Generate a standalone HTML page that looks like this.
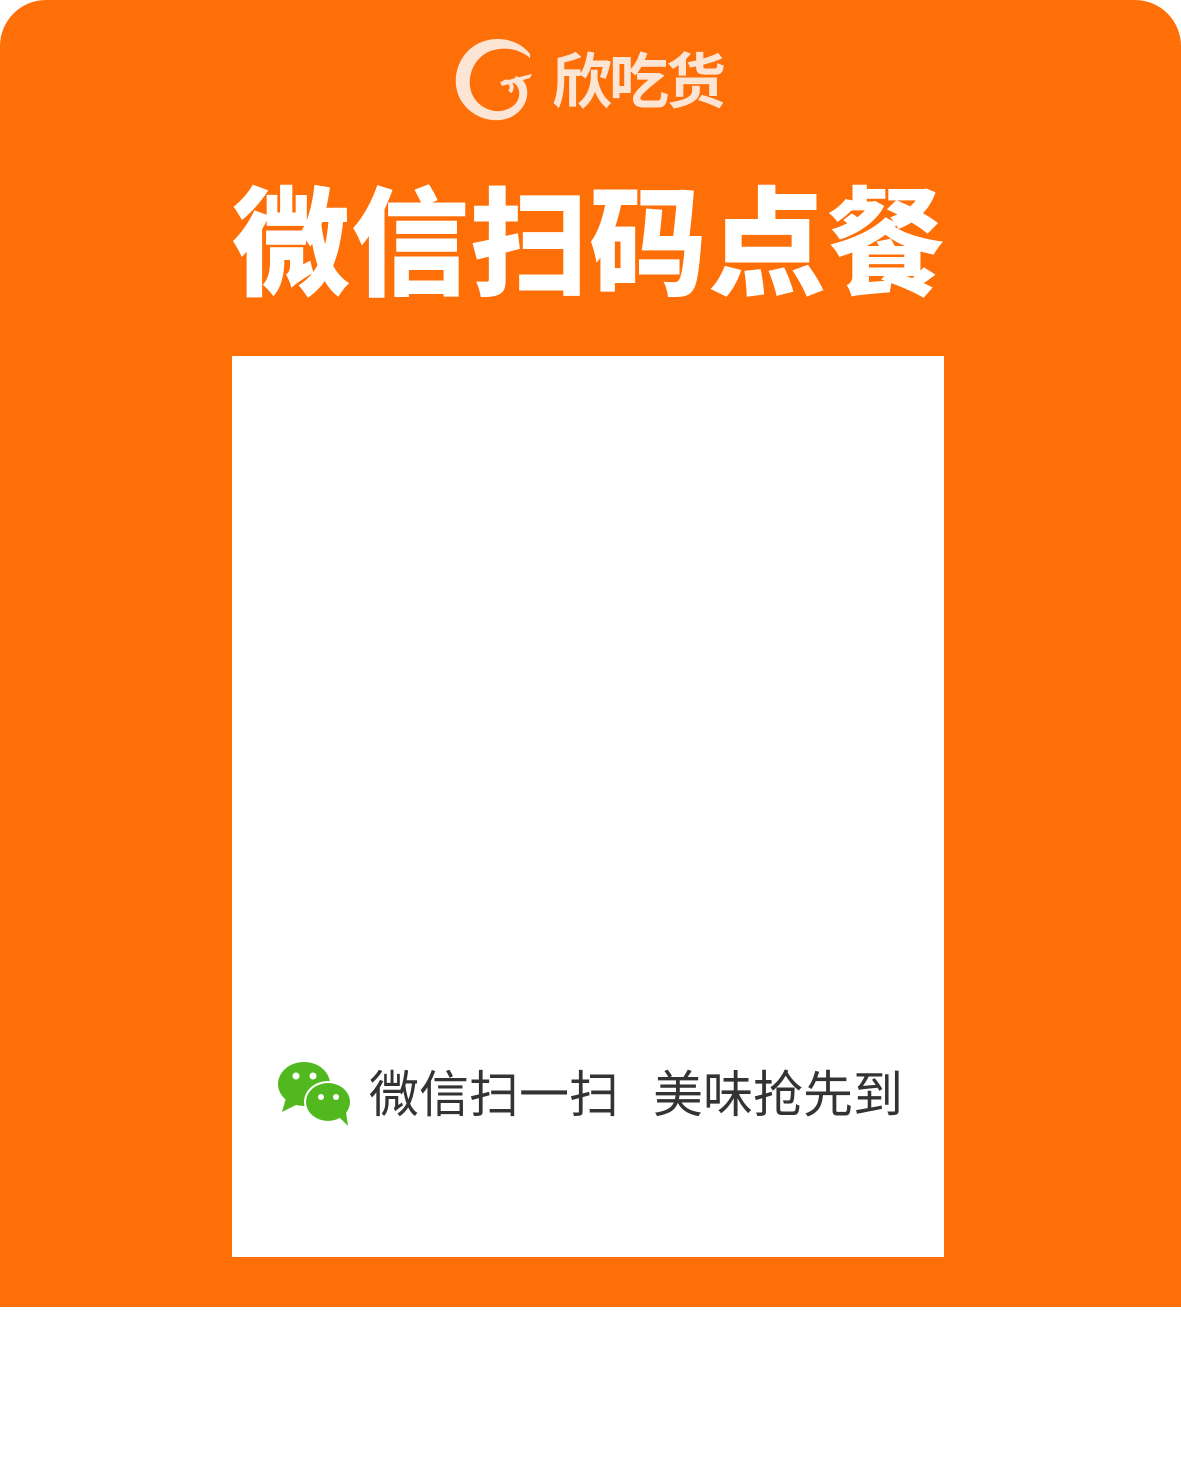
<!DOCTYPE html>
<html><head><meta charset="utf-8"><style>
html,body{margin:0;padding:0;width:1181px;height:1470px;background:#fff;overflow:hidden}
.bg{position:absolute;left:0;top:0;width:1181px;height:1307px;background:#fe6f08;border-radius:46px 46px 0 0}
.logo{position:absolute;left:452px;top:36px}
.brand{position:absolute;left:552px;top:40px;font:bold 60px "Noto Sans CJK SC",sans-serif;color:#fde5d6;letter-spacing:-3px;line-height:76px}
.title{position:absolute;left:232px;top:160px;white-space:nowrap;font:900 118px/150px "Noto Sans CJK SC",sans-serif;color:#fff;letter-spacing:1px}
.box{position:absolute;left:232px;top:356px;width:712px;height:901px;background:#fff}
.t{position:absolute;top:1058px;font:50px/66px "Noto Sans CJK SC",sans-serif;color:#333}
</style></head><body>
<div class="bg"></div>
<svg class="logo" width="84" height="88" viewBox="0 0 84 88">
<path d="M78 18 C66 2 40 -2 22 10 C4 22 -2 48 10 66 C22 84 48 90 64 78 C80 66 78 44 64 40 L60 46 C70 50 70 66 58 72 C44 80 26 72 20 58 C14 44 20 24 36 16 C50 10 66 12 78 22 Z" fill="#fde5d6"/>
<path d="M48 46 L80 38 L78 42 L50 50 Z" fill="#fde5d6"/>
<path d="M58 56 C62 50 58 44 52 46" stroke="#fde5d6" stroke-width="4" fill="none"/>
</svg>
<div class="brand">欣吃货</div>
<div class="title">微信扫码点餐</div>
<div class="box"></div>
<svg style="position:absolute;left:276px;top:1060px" width="78" height="68" viewBox="0 0 78 68">
<ellipse cx="28" cy="24" rx="26" ry="22" fill="#51b81f"/>
<path d="M10 38 L6 52 L22 44 Z" fill="#51b81f"/>
<ellipse cx="52" cy="42" rx="24" ry="21" fill="#fff"/>
<ellipse cx="52" cy="42" rx="22" ry="19" fill="#51b81f"/>
<path d="M62 56 L72 66 L70 52 Z" fill="#51b81f"/>
<circle cx="20" cy="16" r="3.5" fill="#fff"/><circle cx="37" cy="16" r="3.5" fill="#fff"/>
<circle cx="45" cy="37" r="3" fill="#fff"/><circle cx="60" cy="37" r="3" fill="#fff"/>
</svg>
<div class="t" style="left:369px">微信扫一扫</div>
<div class="t" style="left:653px">美味抢先到</div>
</body></html>
